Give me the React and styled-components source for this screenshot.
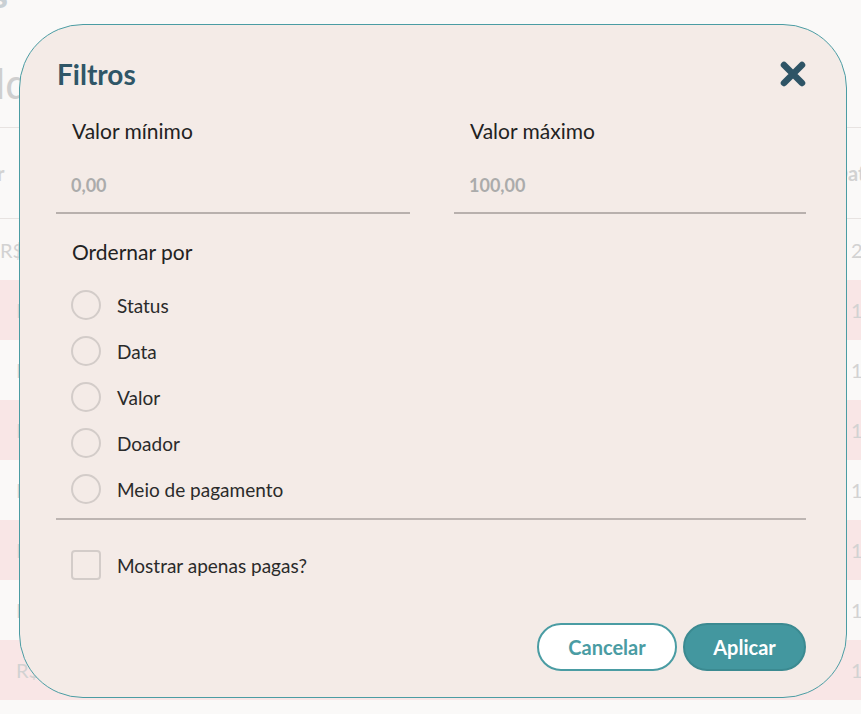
import React, { useState } from 'react';
import styled, { createGlobalStyle } from 'styled-components';

const GlobalStyle = createGlobalStyle`
  html, body {
    margin: 0;
    padding: 0;
    background: #faf9f8;
    font-family: 'Lato', 'Open Sans', sans-serif;
    overflow: hidden;
  }
  * { box-sizing: border-box; }
`;

const ORDER_OPTIONS = ['Status', 'Data', 'Valor', 'Doador', 'Meio de pagamento'];
const ROWS = [
  { value: 'R$ 250,00', date: '22/03/2024' },
  { value: 'R$ 120,00', date: '18/03/2024' },
  { value: 'R$ 80,00', date: '17/03/2024' },
  { value: 'R$ 45,00', date: '15/03/2024' },
  { value: 'R$ 300,00', date: '14/03/2024' },
  { value: 'R$ 60,00', date: '12/03/2024' },
  { value: 'R$ 95,00', date: '11/03/2024' },
  { value: 'R$ 150,00', date: '10/03/2024' },
];

const App = () => {
  const [order, setOrder] = useState(null);
  const [onlyPaid, setOnlyPaid] = useState(false);

  return (
    <>
      <GlobalStyle />
      <Page>
        <PageTitle>Doações</PageTitle>
        <SectionTitle>Saldo</SectionTitle>
        <Table>
          <HeaderRow>
            <Cell $bold $indent={8}>Valor</Cell>
            <Cell $bold>Data</Cell>
          </HeaderRow>
          {ROWS.map((row, i) => (
            <Row key={i} $pink={i % 2 === 1} $first={i === 0}>
              <Cell $indent={i === 0 ? 50 : 66}>{row.value}</Cell>
              <Cell $indent={18}>{row.date}</Cell>
            </Row>
          ))}
        </Table>
      </Page>

      <Overlay>
        <Modal>
          <Header>
            <Title>Filtros</Title>
            <CloseButton aria-label="Fechar">
              <svg width="28" height="28" viewBox="0 0 28 28">
                <path
                  d="M5 5 L23 23 M23 5 L5 23"
                  stroke="#2e5466"
                  strokeWidth="6.5"
                  strokeLinecap="round"
                  fill="none"
                />
              </svg>
            </CloseButton>
          </Header>

          <Fields>
            <Field>
              <Label>Valor mínimo</Label>
              <Input placeholder="0,00" />
            </Field>
            <Field>
              <Label>Valor máximo</Label>
              <Input placeholder="100,00" />
            </Field>
          </Fields>

          <SortLabel>Ordernar por</SortLabel>
          <RadioList>
            {ORDER_OPTIONS.map((opt) => (
              <OptionRow key={opt} onClick={() => setOrder(opt)}>
                <RadioCircle $checked={order === opt} />
                <OptionText>{opt}</OptionText>
              </OptionRow>
            ))}
          </RadioList>

          <Divider />

          <CheckRow onClick={() => setOnlyPaid(!onlyPaid)}>
            <CheckBox $checked={onlyPaid} />
            <OptionText>Mostrar apenas pagas?</OptionText>
          </CheckRow>

          <Footer>
            <CancelButton>Cancelar</CancelButton>
            <ApplyButton>Aplicar</ApplyButton>
          </Footer>
        </Modal>
      </Overlay>
    </>
  );
};

export default App;

const Page = styled.div`
  margin-left: -50px;
  width: 1000px;
  height: 714px;
  display: flex;
  flex-direction: column;
`;

const PageTitle = styled.h1`
  margin: -22px 0 0 -74px;
  height: 34px;
  font-size: 34px;
  line-height: 34px;
  font-weight: 900;
  color: #c9d0d4;
`;

const SectionTitle = styled.h2`
  margin: 46px 0 0 2px;
  height: 69px;
  font-size: 42px;
  line-height: 50px;
  font-weight: 400;
  color: #cfcfcf;
`;

const Table = styled.div`
  display: flex;
  flex-direction: column;
  border-top: 1px solid #e7e3e1;
`;

const Row = styled.div`
  display: grid;
  grid-template-columns: 883px 1fr;
  align-items: center;
  height: ${(p) => (p.$first ? '61px' : '60px')};
  flex-shrink: 0;
  background: ${(p) => (p.$pink ? '#f9e6e6' : '#faf9f8')};
`;

const HeaderRow = styled(Row)`
  height: 91px;
  border-bottom: 1px solid #e7e3e1;
  background: #faf9f8;
`;

const Cell = styled.span`
  font-size: 20px;
  color: #d2d2d2;
  white-space: nowrap;
  font-weight: ${(p) => (p.$bold ? 700 : 400)};
  padding-left: ${(p) => p.$indent || 0}px;
`;

const Overlay = styled.div`
  position: fixed;
  inset: 0;
  padding: 24px 14px 16px 19px;
  display: flex;
  align-items: flex-start;
`;

const Modal = styled.div`
  width: 828px;
  height: 674px;
  background: #f4ebe7;
  border: 1px solid #4a9ca3;
  border-radius: 64px;
  padding: 35px 40px 26px 36px;
  display: flex;
  flex-direction: column;
`;

const Header = styled.div`
  height: 59px;
  display: flex;
  justify-content: space-between;
  align-items: flex-start;
`;

const Title = styled.h3`
  margin: 0;
  font-size: 28px;
  line-height: 28px;
  font-weight: 700;
  color: #2f5667;
  padding-left: 1px;
`;

const CloseButton = styled.button`
  background: none;
  border: none;
  padding: 0;
  margin-right: -1px;
  width: 28px;
  height: 28px;
  cursor: pointer;
  display: flex;
`;

const Fields = styled.div`
  display: grid;
  grid-template-columns: 354px 352px;
  column-gap: 44px;
`;

const Field = styled.div`
  display: flex;
  flex-direction: column;
`;

const Label = styled.label`
  padding-left: 16px;
  font-size: 21px;
  line-height: 24px;
  color: #222;
`;

const Input = styled.input`
  height: 71px;
  padding: 14px 15px 0;
  border: none;
  border-bottom: 2px solid #b8b0ad;
  background: transparent;
  font-family: inherit;
  font-size: 18px;
  font-weight: 700;
  color: #444;
  outline: none;

  &::placeholder {
    color: #ababab;
  }
`;

const SortLabel = styled(Label)`
  margin-top: 26px;
`;

const RadioList = styled.div`
  margin-top: 26px;
  padding-left: 15px;
  display: flex;
  flex-direction: column;
  gap: 16px;
`;

const OptionRow = styled.div`
  display: flex;
  align-items: center;
  gap: 16px;
  height: 30px;
  cursor: pointer;
`;

const RadioCircle = styled.span`
  width: 30px;
  height: 30px;
  border-radius: 50%;
  border: 2px solid #d3ccc9;
  background: ${(p) => (p.$checked ? '#4a9ca3' : 'transparent')};
  box-shadow: ${(p) => (p.$checked ? 'inset 0 0 0 5px #f4ebe7' : 'none')};
`;

const OptionText = styled.span`
  font-size: 19px;
  color: #2a2a2a;
`;

const Divider = styled.hr`
  margin: 14px 0 0;
  border: none;
  height: 2px;
  background: #bdb5b2;
`;

const CheckRow = styled(OptionRow)`
  margin-top: 30px;
  padding-left: 15px;
`;

const CheckBox = styled.span`
  width: 30px;
  height: 30px;
  border-radius: 4px;
  border: 2px solid #d3ccc9;
  background: ${(p) => (p.$checked ? '#4a9ca3' : 'transparent')};
`;

const Footer = styled.div`
  margin-top: auto;
  display: flex;
  justify-content: flex-end;
  gap: 6px;
`;

const BaseButton = styled.button`
  height: 48px;
  border-radius: 24px;
  font-family: inherit;
  font-size: 20px;
  font-weight: 700;
  cursor: pointer;
`;

const CancelButton = styled(BaseButton)`
  width: 140px;
  background: #ffffff;
  border: 2px solid #4a9ca3;
  color: #4a9ca3;
`;

const ApplyButton = styled(BaseButton)`
  width: 123px;
  background: #43979f;
  border: 2px solid #3b8a91;
  color: #ffffff;
`;
